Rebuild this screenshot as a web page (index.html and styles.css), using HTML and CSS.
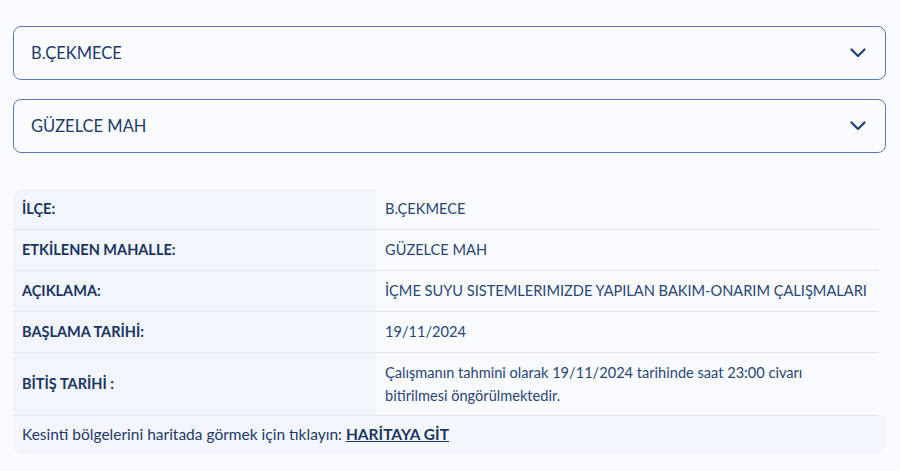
FILE: index.html
```html
<!DOCTYPE html>
<html lang="tr">
<head>
  <meta charset="UTF-8" />
  <meta name="viewport" content="width=device-width, initial-scale=1.0" />
  <title>Su Kesintisi</title>
  <link rel="stylesheet" href="styles.css">
</head>
<body>
  <div class="wrap">
    <div class="select">
      <span>B.ÇEKMECE</span>
      <svg class="chevron" width="16" height="10" viewBox="0 0 16 10"><path d="M1.5 1.5 L8 8 L14.5 1.5" fill="none" stroke="#1f3f78" stroke-width="2.2" stroke-linecap="round" stroke-linejoin="round"/></svg>
    </div>
    <div class="select">
      <span>GÜZELCE MAH</span>
      <svg class="chevron" width="16" height="10" viewBox="0 0 16 10"><path d="M1.5 1.5 L8 8 L14.5 1.5" fill="none" stroke="#1f3f78" stroke-width="2.2" stroke-linecap="round" stroke-linejoin="round"/></svg>
    </div>

    <div class="info">
      <div class="row">
        <div class="label">İLÇE:</div>
        <div class="value">B.ÇEKMECE</div>
      </div>
      <div class="row">
        <div class="label">ETKİLENEN MAHALLE:</div>
        <div class="value">GÜZELCE MAH</div>
      </div>
      <div class="row">
        <div class="label">AÇIKLAMA:</div>
        <div class="value">İÇME SUYU SISTEMLERIMIZDE YAPILAN BAKIM-ONARIM ÇALIŞMALARI</div>
      </div>
      <div class="row">
        <div class="label">BAŞLAMA TARİHİ:</div>
        <div class="value">19/11/2024</div>
      </div>
      <div class="row">
        <div class="label">BİTİŞ TARİHİ :</div>
        <div class="value">Çalışmanın tahmini olarak 19/11/2024 tarihinde saat 23:00 civarı<br>bitirilmesi öngörülmektedir.</div>
      </div>
      <div class="footer">
        Kesinti bölgelerini haritada görmek için tıklayın: <a href="#">HARİTAYA GİT</a>
      </div>
    </div>
  </div>
</body>
</html>
```

FILE: styles.css
```css
body {
  margin: 0;
  background-color: #f9fbfe;
  font-family: Lato, "Open Sans", sans-serif;
  color: #1d3a6b;
}
.wrap {
  padding: 26px 14px 0 13px;
}
.select {
  display: flex;
  align-items: center;
  justify-content: space-between;
  height: 52px;
  padding: 0 19px 0 17px;
  margin-bottom: 19px;
  border: 1px solid #5a7bb0;
  border-radius: 8px;
  background-color: #fbfcff;
  font-size: 16.5px;
  color: #1e3a6b;
}
.chevron {
  display: block;
}
.info {
  margin-top: 36px;
  border-radius: 10px;
  overflow: hidden;
  background-color: #f9fbfe;
}
.row {
  display: grid;
  grid-template-columns: 363px 1fr;
  border-bottom: 1px solid #e3e8f0;
  margin-right: 7px;
}
.label {
  background-color: #f2f6fc;
  padding: 8px 9px;
  line-height: 24px;
  font-size: 14.5px;
  font-weight: 700;
  color: #1b3461;
  display: flex;
  align-items: center;
}
.value {
  padding: 8px 9px;
  line-height: 23px;
  font-size: 14.6px;
  color: #2a4676;
}
.footer {
  background-color: #f3f6fc;
  padding: 7px 9px 8px;
  line-height: 23px;
  font-size: 15.5px;
  color: #1f3a68;
}
.footer a {
  color: #1b3461;
  font-weight: 700;
  text-decoration: underline;
}
```
